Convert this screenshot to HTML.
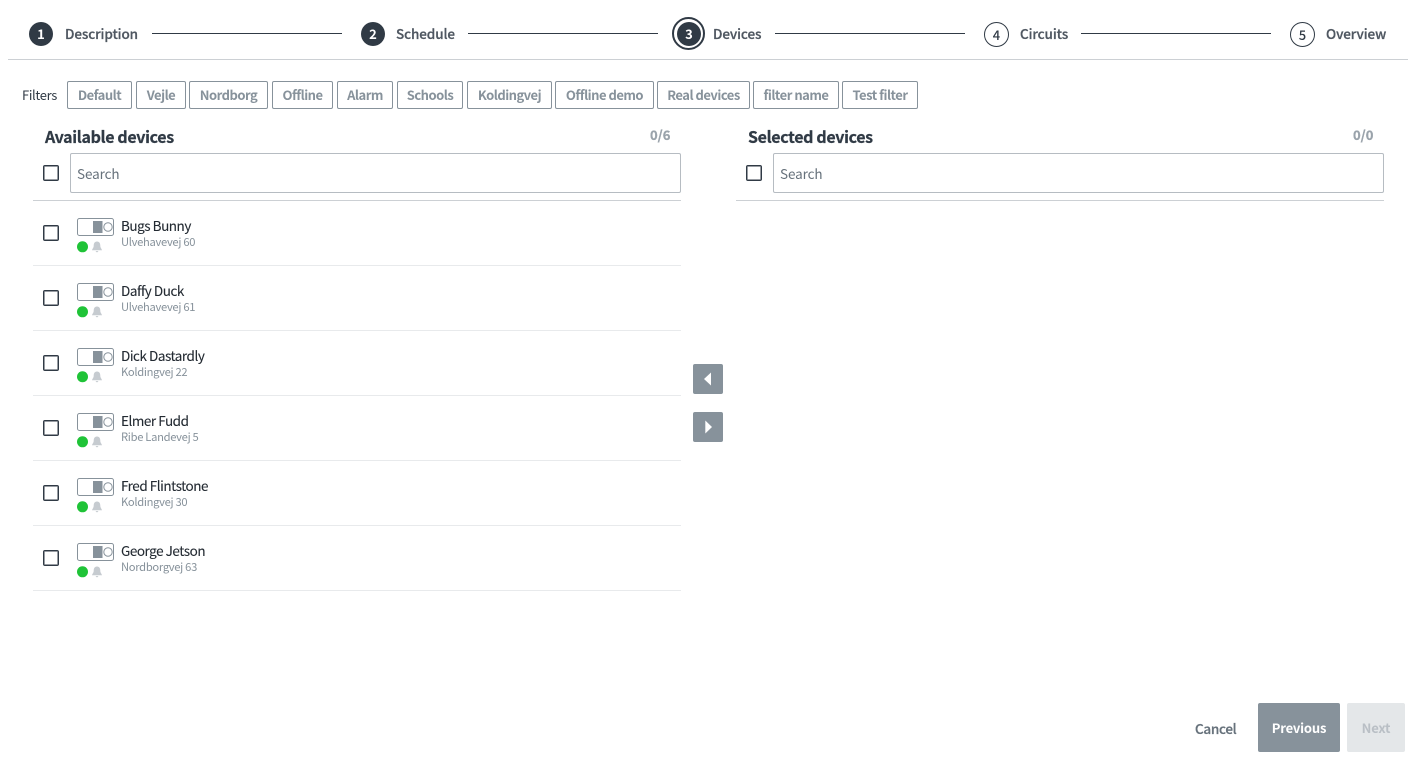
<!DOCTYPE html>
<html lang="en"><head><meta charset="utf-8"><title>Devices</title>
<style>
html,body{margin:0;padding:0;background:#fff}
body{width:1417px;height:761px;position:relative;overflow:hidden;font-family:"Noto Sans CJK JP","Liberation Sans",sans-serif;color:#303a45;font-size:14px}
.a{position:absolute;white-space:nowrap;line-height:20px}
.line{position:absolute;height:1px;background:#303a45;top:33px;width:190px}
.hr{position:absolute;height:1px;background:#d4d8db}
.c{position:absolute;width:24px;height:24px;border-radius:50%;background:#303a45;color:#fff;text-align:center;line-height:24px;font-size:13px;font-weight:700;top:22px}
.c.o{background:#fff;color:#303a45;border:1px solid #303a45;width:23px;height:23px;line-height:23px;font-weight:500}
.st{position:absolute;top:23px;line-height:20px;font-size:13.5px;letter-spacing:-.1px;font-weight:500;color:#4f5761;white-space:nowrap;-webkit-text-stroke:.25px #4f5761}
.chip{position:absolute;top:81px;height:26px;line-height:26px;border:1px solid #87929b;border-radius:2px;text-align:center;font-size:13px;letter-spacing:-.5px;font-weight:700;color:#87929b;box-sizing:content-box;white-space:nowrap}
.cb{position:absolute;width:14px;height:14px;border:1px solid #303a45;box-shadow:inset 0 0 0 .5px #303a45;border-radius:2px;background:#fff;left:43px}
.inp{position:absolute;top:153px;height:38px;border:1px solid #b6bcc2;border-radius:2px;line-height:38px;color:#66717b;font-size:13.5px;letter-spacing:-.1px;text-indent:6px}
.h{position:absolute;top:126px;font-size:16px;letter-spacing:-.35px;font-weight:700;line-height:20px;color:#303a45;white-space:nowrap;-webkit-text-stroke:.25px #303a45}
.cnt{position:absolute;top:126px;font-size:13px;font-weight:700;color:#9aa3ab;line-height:18px;-webkit-text-stroke:.3px #9aa3ab}
.nm{position:absolute;left:121px;font-size:13.5px;letter-spacing:-.47px;line-height:18px;color:#232a32;white-space:nowrap;-webkit-text-stroke:.1px #232a32}
.ad{position:absolute;left:121px;font-size:11.2px;letter-spacing:-.3px;line-height:16px;color:#87929b;white-space:nowrap}
.ic{position:absolute;left:77px}
.btn{position:absolute;width:30px;height:30px;left:693px;background:#87929b;border-radius:2px}
</style></head><body>

<div class="c" style="left:29px">1</div><div class="st" style="left:65px">Description</div><div class="line" style="left:152px"></div>
<div class="c" style="left:361px">2</div><div class="st" style="left:396px">Schedule</div><div class="line" style="left:468px"></div>
<div style="position:absolute;left:672px;top:17px;width:29px;height:29px;border:2px solid #303a45;border-radius:50%"></div>
<div class="c" style="left:677px">3</div><div class="st" style="left:713px">Devices</div><div class="line" style="left:775px"></div>
<div class="c o" style="left:984px">4</div><div class="st" style="left:1020px">Circuits</div><div class="line" style="left:1081px"></div>
<div class="c o" style="left:1290px">5</div><div class="st" style="left:1326px">Overview</div>
<div class="hr" style="left:8px;width:1400px;top:59px;background:#ccd0d4"></div>

<div class="a" style="left:22px;top:85px;font-size:13px;letter-spacing:-.35px;color:#303a45">Filters</div>
<div class="chip" style="left:67px;width:63px">Default</div>
<div class="chip" style="left:136px;width:48px">Vejle</div>
<div class="chip" style="left:189px;width:77px">Nordborg</div>
<div class="chip" style="left:272px;width:59px">Offline</div>
<div class="chip" style="left:337px;width:54px">Alarm</div>
<div class="chip" style="left:397px;width:64px">Schools</div>
<div class="chip" style="left:467px;width:83px">Koldingvej</div>
<div class="chip" style="left:555px;width:97px">Offline demo</div>
<div class="chip" style="left:657px;width:91px">Real devices</div>
<div class="chip" style="left:753px;width:84px">filter name</div>
<div class="chip" style="left:842px;width:74px">Test filter</div>

<div class="h" style="left:45px">Available devices</div>
<div class="cnt" style="left:650px">0/6</div>
<div class="cb" style="top:165px"></div>
<div class="inp" style="left:70px;width:609px">Search</div>
<div class="hr" style="left:33px;width:648px;top:200px;background:#ccd0d4"></div>

<div class="h" style="left:748px">Selected devices</div>
<div class="cnt" style="left:1353px">0/0</div>
<div class="cb" style="top:165px;left:746px"></div>
<div class="inp" style="left:773px;width:609px">Search</div>
<div class="hr" style="left:736px;width:648px;top:200px;background:#ccd0d4"></div>

<div class="cb" style="top:225px"></div>
<svg class="ic" style="top:217px" width="40" height="38" viewBox="0 0 40 38"><rect x=".5" y="1.5" width="36" height="17" rx="2" fill="#fff" stroke="#87929b"/><rect x="16" y="4" width="9.500" height="12" fill="#87929b"/><circle cx="31" cy="10" r="4.200" fill="#fff" stroke="#87929b"/><circle cx="5.500" cy="29.800" r="5.500" fill="#1fc337"/><path d="M20 24.500c-2.400 0-3.300 2-3.300 4.300 0 2-1.300 3-1.700 4.400h10c-.4-1.400-1.700-2.400-1.700-4.400 0-2.300-.9-4.300-3.300-4.300zM18.500 34h3l-1.500 1.500z" fill="#c6cbd0"/></svg>
<div class="nm" style="top:216px">Bugs Bunny</div><div class="ad" style="top:234px">Ulvehavevej 60</div>
<div class="hr" style="left:33px;width:648px;top:265px;background:#e8eaec"></div>

<div class="cb" style="top:290px"></div>
<svg class="ic" style="top:282px" width="40" height="38" viewBox="0 0 40 38"><rect x=".5" y="1.5" width="36" height="17" rx="2" fill="#fff" stroke="#87929b"/><rect x="16" y="4" width="9.500" height="12" fill="#87929b"/><circle cx="31" cy="10" r="4.200" fill="#fff" stroke="#87929b"/><circle cx="5.500" cy="29.800" r="5.500" fill="#1fc337"/><path d="M20 24.500c-2.400 0-3.300 2-3.300 4.300 0 2-1.300 3-1.700 4.400h10c-.4-1.400-1.700-2.400-1.700-4.400 0-2.300-.9-4.300-3.300-4.300zM18.500 34h3l-1.500 1.500z" fill="#c6cbd0"/></svg>
<div class="nm" style="top:281px">Daffy Duck</div><div class="ad" style="top:299px">Ulvehavevej 61</div>
<div class="hr" style="left:33px;width:648px;top:330px;background:#e8eaec"></div>

<div class="cb" style="top:355px"></div>
<svg class="ic" style="top:347px" width="40" height="38" viewBox="0 0 40 38"><rect x=".5" y="1.5" width="36" height="17" rx="2" fill="#fff" stroke="#87929b"/><rect x="16" y="4" width="9.500" height="12" fill="#87929b"/><circle cx="31" cy="10" r="4.200" fill="#fff" stroke="#87929b"/><circle cx="5.500" cy="29.800" r="5.500" fill="#1fc337"/><path d="M20 24.500c-2.400 0-3.300 2-3.300 4.300 0 2-1.300 3-1.700 4.400h10c-.4-1.400-1.700-2.400-1.700-4.400 0-2.300-.9-4.300-3.300-4.300zM18.500 34h3l-1.500 1.500z" fill="#c6cbd0"/></svg>
<div class="nm" style="top:346px">Dick Dastardly</div><div class="ad" style="top:364px">Koldingvej 22</div>
<div class="hr" style="left:33px;width:648px;top:395px;background:#e8eaec"></div>

<div class="cb" style="top:420px"></div>
<svg class="ic" style="top:412px" width="40" height="38" viewBox="0 0 40 38"><rect x=".5" y="1.5" width="36" height="17" rx="2" fill="#fff" stroke="#87929b"/><rect x="16" y="4" width="9.500" height="12" fill="#87929b"/><circle cx="31" cy="10" r="4.200" fill="#fff" stroke="#87929b"/><circle cx="5.500" cy="29.800" r="5.500" fill="#1fc337"/><path d="M20 24.500c-2.400 0-3.300 2-3.300 4.300 0 2-1.300 3-1.700 4.400h10c-.4-1.400-1.700-2.400-1.700-4.400 0-2.300-.9-4.300-3.300-4.300zM18.500 34h3l-1.500 1.500z" fill="#c6cbd0"/></svg>
<div class="nm" style="top:411px">Elmer Fudd</div><div class="ad" style="top:429px">Ribe Landevej 5</div>
<div class="hr" style="left:33px;width:648px;top:460px;background:#e8eaec"></div>

<div class="cb" style="top:485px"></div>
<svg class="ic" style="top:477px" width="40" height="38" viewBox="0 0 40 38"><rect x=".5" y="1.5" width="36" height="17" rx="2" fill="#fff" stroke="#87929b"/><rect x="16" y="4" width="9.500" height="12" fill="#87929b"/><circle cx="31" cy="10" r="4.200" fill="#fff" stroke="#87929b"/><circle cx="5.500" cy="29.800" r="5.500" fill="#1fc337"/><path d="M20 24.500c-2.400 0-3.300 2-3.300 4.300 0 2-1.300 3-1.700 4.400h10c-.4-1.400-1.700-2.400-1.700-4.400 0-2.300-.9-4.300-3.300-4.300zM18.500 34h3l-1.500 1.500z" fill="#c6cbd0"/></svg>
<div class="nm" style="top:476px">Fred Flintstone</div><div class="ad" style="top:494px">Koldingvej 30</div>
<div class="hr" style="left:33px;width:648px;top:525px;background:#e8eaec"></div>

<div class="cb" style="top:550px"></div>
<svg class="ic" style="top:542px" width="40" height="38" viewBox="0 0 40 38"><rect x=".5" y="1.5" width="36" height="17" rx="2" fill="#fff" stroke="#87929b"/><rect x="16" y="4" width="9.500" height="12" fill="#87929b"/><circle cx="31" cy="10" r="4.200" fill="#fff" stroke="#87929b"/><circle cx="5.500" cy="29.800" r="5.500" fill="#1fc337"/><path d="M20 24.500c-2.400 0-3.300 2-3.300 4.300 0 2-1.300 3-1.700 4.400h10c-.4-1.400-1.700-2.400-1.700-4.400 0-2.300-.9-4.300-3.300-4.300zM18.500 34h3l-1.500 1.500z" fill="#c6cbd0"/></svg>
<div class="nm" style="top:541px">George Jetson</div><div class="ad" style="top:559px">Nordborgvej 63</div>
<div class="hr" style="left:33px;width:648px;top:590px;background:#e8eaec"></div>

<div class="btn" style="top:364px"><svg width="30" height="30" style="display:block"><path d="M18 8.500v13l-7-6.500z" fill="#fff"/></svg></div>
<div class="btn" style="top:412px"><svg width="30" height="30" style="display:block"><path d="M12.300 8.500v13l6.700-6.500z" fill="#fff"/></svg></div>

<div class="a" style="left:1195px;top:718px;font-size:13.5px;letter-spacing:-.3px;font-weight:500;color:#66717b;-webkit-text-stroke:.25px #66717b">Cancel</div>
<div style="position:absolute;left:1258px;top:703px;width:82px;height:49px;background:#87929b;border-radius:2px;color:#fff;font-weight:700;font-size:13px;letter-spacing:-.2px;line-height:50px;text-align:center">Previous</div>
<div style="position:absolute;left:1347px;top:703px;width:58px;height:49px;background:#e4e7e9;border-radius:2px;color:#b9bfc5;font-weight:700;font-size:13px;letter-spacing:-.2px;line-height:50px;text-align:center">Next</div>

</body></html>
